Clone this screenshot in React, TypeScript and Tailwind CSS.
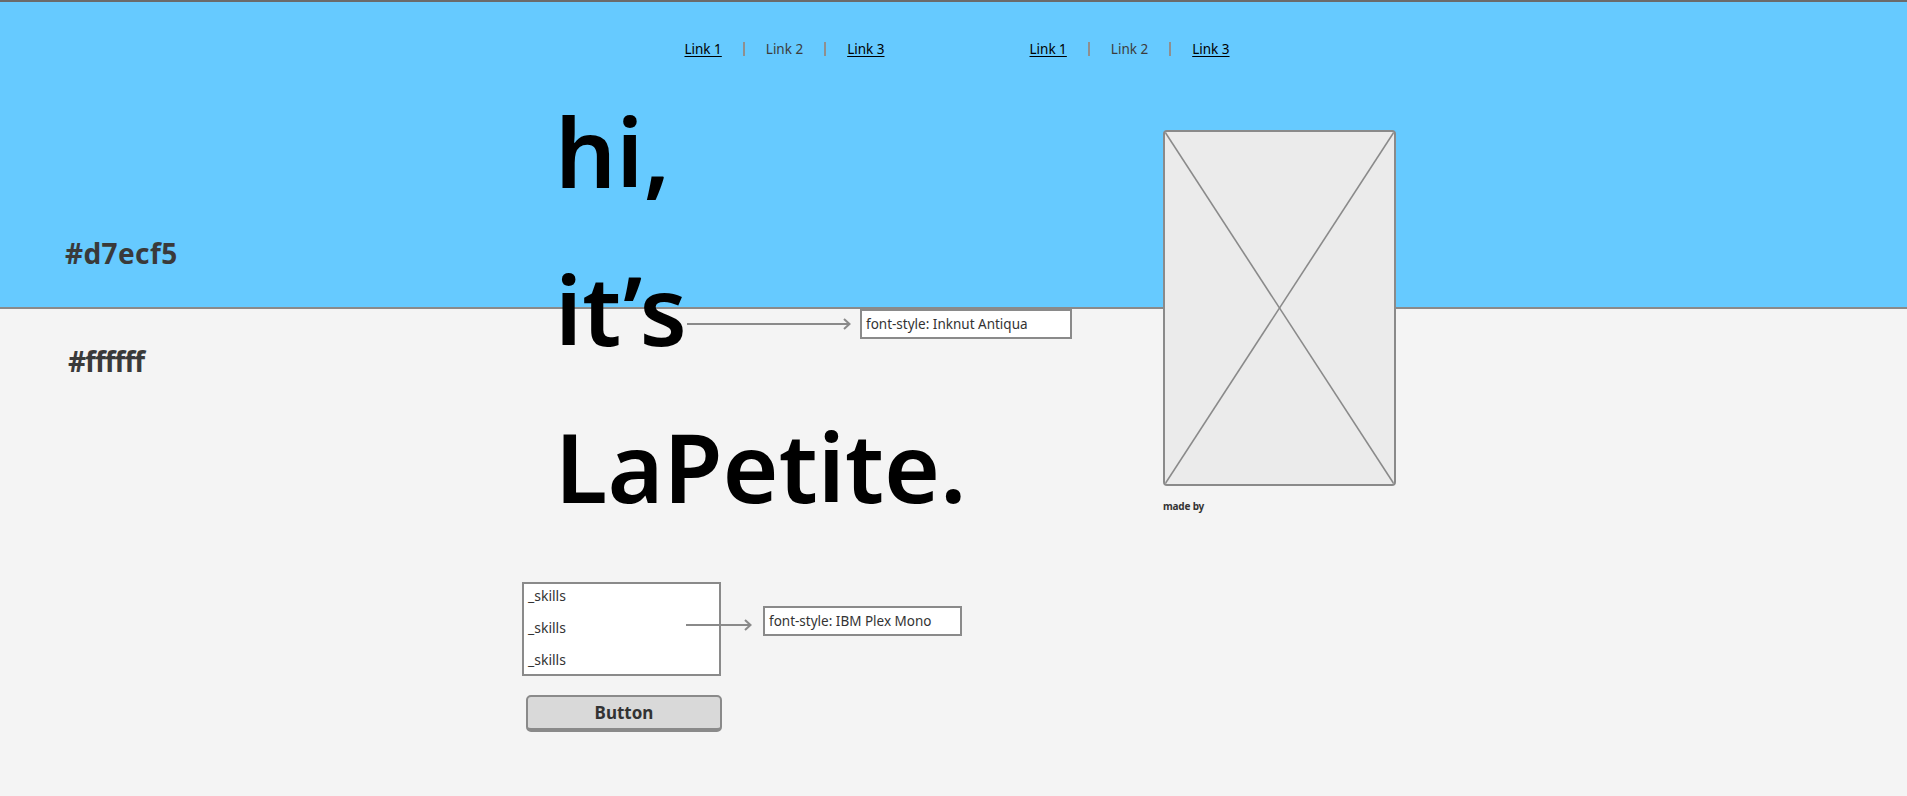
import type { ReactNode } from "react";

function Arrow({ width }: { width: number }) {
  return (
    <svg width={width} height={12} viewBox={`0 0 ${width} 12`} className="block shrink-0">
      <line x1={0} y1={6} x2={width - 1.5} y2={6} stroke="#8a8a8a" strokeWidth={2} />
      <polyline
        points={`${width - 7},1 ${width - 1.5},6 ${width - 7},11`}
        fill="none"
        stroke="#8a8a8a"
        strokeWidth={2}
      />
    </svg>
  );
}

function NavLinks() {
  return (
    <div className="flex items-center gap-[21px] text-[13.5px] leading-5">
      <a href="#" className="text-black underline underline-offset-2">
        Link 1
      </a>
      <span className="h-[14px] w-[2px] bg-[#8f8f8f]" />
      <a href="#" className="text-[#3c3c3c]">
        Link 2
      </a>
      <span className="h-[14px] w-[2px] bg-[#8f8f8f]" />
      <a href="#" className="text-black underline underline-offset-2">
        Link 3
      </a>
    </div>
  );
}

function Note({ children, className }: { children: ReactNode; className?: string }) {
  return (
    <div
      className={
        "h-[30px] shrink-0 border-2 border-[#8a8a8a] bg-white pl-[4px] text-[13.5px] font-normal leading-[26px] text-[#333] " +
        (className ?? "")
      }
    >
      {children}
    </div>
  );
}

export default function App() {
  return (
    <div className="min-h-screen border-t-2 border-[#6b6b6b] bg-[linear-gradient(to_bottom,#66caff_0,#66caff_305px,#8a8a8a_305px,#8a8a8a_307px,#f4f4f4_307px)] font-['Noto_Sans',sans-serif]">
      <nav className="flex h-[70px] items-start justify-center gap-[145px] pl-[7px] pt-[37px]">
        <NavLinks />
        <NavLinks />
      </nav>

      <main className="flex">
        {/* colour notes */}
        <div className="w-[522px] shrink-0 pl-[65px] text-[28px] font-bold leading-[36px] text-[#3a3a3a]">
          <p className="mt-[163px] tracking-[0.4px]">#d7ecf5</p>
          <p className="ml-[3px] mt-[72px] tracking-[-1px]">#ffffff</p>
        </div>

        {/* hero */}
        <div className="w-[641px] shrink-0">
          <div className="ml-[33px] text-[96px] font-semibold leading-[157.5px] text-black">
            <div>hi,</div>
            <div className="flex items-start">
              <span className="w-[126px] shrink-0">it’s</span>
              <div className="ml-[6px] mt-[88.5px]">
                <Arrow width={164} />
              </div>
              <Note className="ml-[9px] mt-[79.5px] w-[212px]">font-style: Inknut Antiqua</Note>
            </div>
            <div>LaPetite.</div>
          </div>

          <div className="mt-[37.5px] flex items-start">
            <div className="flex h-[94px] w-[199px] shrink-0 flex-col justify-center border-2 border-[#8a8a8a] bg-white pl-[4px] text-[14px] leading-[32px] text-[#333]">
              <span className="-mt-[2px]">_skills</span>
              <span>_skills</span>
              <span>_skills</span>
            </div>
            <div className="-ml-[35px] mt-[37px]">
              <Arrow width={66} />
            </div>
            <Note className="ml-[11px] mt-[24px] w-[199px]">font-style: IBM Plex Mono</Note>
          </div>

          <button className="ml-[4px] mt-[19px] h-[37px] w-[196px] rounded-[5px] border-2 border-b-4 border-[#8a8a8a] bg-[#d9d9d9] text-[17px] font-bold leading-none text-[#333]">
            Button
          </button>
        </div>

        {/* picture */}
        <div className="mt-[58px] w-[233px] shrink-0">
          <div className="h-[356px] w-[233px] overflow-hidden rounded-[4px] border-2 border-[#8a8a8a] bg-[#ebebeb]">
            <svg className="block h-full w-full" viewBox="0 0 229 352" preserveAspectRatio="none">
              <line x1={0} y1={0} x2={229} y2={352} stroke="#8a8a8a" strokeWidth={1.6} />
              <line x1={229} y1={0} x2={0} y2={352} stroke="#8a8a8a" strokeWidth={1.6} />
            </svg>
          </div>
          <p className="mt-[13px] text-[10px] font-bold leading-[14px] tracking-[-0.2px] text-[#333]">made by</p>
        </div>
      </main>
    </div>
  );
}
